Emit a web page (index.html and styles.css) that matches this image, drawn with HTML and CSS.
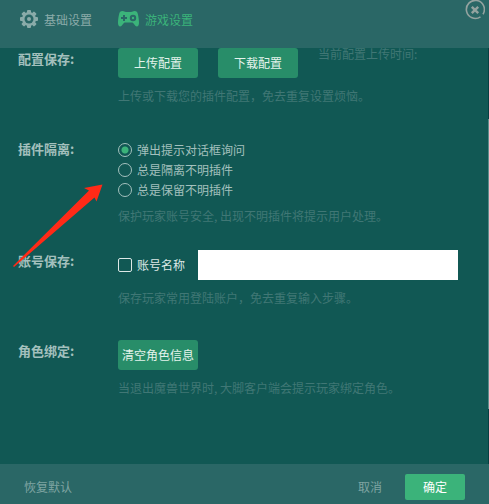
FILE: index.html
```html
<!DOCTYPE html>
<html lang="zh-CN">
<head>
<meta charset="utf-8">
<title>游戏设置</title>
<link rel="stylesheet" href="styles.css">
</head>
<body>
<form class="dialog">
  <header class="header">
    <nav class="tabs">
      <a class="tab" href="#basic">
        <svg class="gear" viewBox="0 0 18 18" width="18" height="18" aria-hidden="true">
          <g fill="currentColor">
            <rect x="7" y="0" width="4" height="18" rx="1"/>
            <rect x="0" y="7" width="18" height="4" rx="1"/>
            <rect x="7" y="0" width="4" height="18" rx="1" transform="rotate(45 9 9)"/>
            <rect x="7" y="0" width="4" height="18" rx="1" transform="rotate(-45 9 9)"/>
            <circle cx="9" cy="9" r="7"/>
          </g>
          <circle class="hole" cx="9" cy="9" r="4.500"/>
          <circle cx="9" cy="9" r="2" fill="currentColor"/>
        </svg>
        <span>基础设置</span>
      </a>
      <a class="tab active" href="#game" aria-current="page">
        <svg class="pad" viewBox="0 0 21 16" width="21" height="16" aria-hidden="true">
          <path fill="currentColor" d="M4.500 0C6 0 6.500 1 8 1h5c1.500 0 2-1 3.500-1 2 0 3 1.200 3.400 3.200.6 2.500 1.100 5.800 1.100 8.800 0 2-.8 3.400-2.200 3.400-1.800 0-2.800-3-4.300-3.900h-8C5 12.400 4 15.400 2.200 15.400.8 15.400 0 14 0 12c0-3 .5-6.300 1.100-8.800C1.500 1.200 2.500 0 4.500 0z"/>
          <path class="mark" d="M3 7h6M6 4v6"/>
          <circle class="mark" cx="15" cy="7" r="2.200"/>
        </svg>
        <span>游戏设置</span>
      </a>
    </nav>
    <button class="close" type="button" aria-label="关闭">
      <svg viewBox="0 0 20 20" width="20" height="20" aria-hidden="true">
        <path d="M15.500 16.800A9 9 0 1 1 18 14.200" stroke-width="1.600"/>
        <path d="M6.800 6.800l6.400 6.400M13.200 6.800l-6.400 6.400" stroke-width="2.400"/>
      </svg>
    </button>
  </header>

  <div class="body">
    <main class="settings">
      <section class="row">
        <h2 class="label">配置保存:</h2>
        <div class="content">
          <div class="line top">
            <button class="btn" type="button">上传配置</button>
            <button class="btn" type="button">下载配置</button>
            <span class="dim">当前配置上传时间:</span>
          </div>
          <p class="hint">上传或下载您的插件配置，免去重复设置烦恼。</p>
        </div>
      </section>
      <section class="row choices">
        <h2 class="label">插件隔离:</h2>
        <div class="content">
          <label class="option"><input type="radio" name="isolate" checked><span>弹出提示对话框询问</span></label>
          <label class="option"><input type="radio" name="isolate"><span>总是隔离不明插件</span></label>
          <label class="option"><input type="radio" name="isolate"><span>总是保留不明插件</span></label>
          <p class="hint near">保护玩家账号安全, 出现不明插件将提示用户处理。</p>
        </div>
      </section>
      <section class="row">
        <h2 class="label">账号保存:</h2>
        <div class="content">
          <div class="line">
            <label class="option account"><input type="checkbox"><span>账号名称</span></label>
            <input class="field" type="text" aria-label="账号名称">
          </div>
          <p class="hint">保存玩家常用登陆账户，免去重复输入步骤。</p>
        </div>
      </section>
      <section class="row">
        <h2 class="label">角色绑定:</h2>
        <div class="content">
          <button class="btn" type="button">清空角色信息</button>
          <p class="hint">当退出魔兽世界时, 大脚客户端会提示玩家绑定角色。</p>
        </div>
      </section>
    </main>
    <div class="track"><div class="thumb"></div></div>
    <svg class="arrow" viewBox="0 0 91 84" width="91" height="84" aria-hidden="true">
      <path d="M90.500.5L72 4l5 2.500L1 82l1 1 80.500-69.500 2 4z"/>
    </svg>
  </div>

  <footer class="footer">
    <button class="link restore" type="button">恢复默认</button>
    <button class="link" type="button">取消</button>
    <button class="ok" type="submit">确定</button>
  </footer>
</form>
</body>
</html>
```
FILE: styles.css
```css
* { box-sizing: border-box; }

body, button, input {
  font-family: "Noto Sans CJK SC", sans-serif;
  font-size: 12px;
  line-height: 20px;
}

body {
  margin: 0;
  color: #a3c0bd;
  background: #115854;
}

button {
  margin: 0;
  padding: 0;
  border: 0;
  background: none;
  color: inherit;
}

.dialog {
  display: flex;
  flex-direction: column;
  min-height: 100vh;
}

.header {
  display: flex;
  justify-content: space-between;
  align-items: flex-start;
  height: 48px;
  padding: 0 4px 0 20px;
  background: #2a6766;
}

.tabs {
  display: flex;
  gap: 26px;
  padding-top: 10px;
}

.tab {
  display: flex;
  align-items: center;
  gap: 6px;
  color: #8aaba9;
  text-decoration: none;
}

.tab.active { color: #3bb37a; }
.gear, .pad { margin-bottom: 2px; }
.hole { fill: #2a6766; }
.mark { fill: none; stroke: #2a6766; stroke-width: 2; }

.close { display: flex; }
.close svg { fill: none; stroke: #94a3a0; }

.body {
  position: relative;
  display: flex;
  flex: 1;
}

.settings {
  flex: 1;
  padding: 0 30px 0 18px;
}

.row {
  display: flex;
  margin-bottom: 32px;
}

.row.choices { margin-bottom: 24px; }
.choices .content { padding-top: 2px; }

.label {
  flex: 0 0 100px;
  margin: 1px 0 0;
  font-size: 13px;
  line-height: 20px;
  font-weight: 700;
}

.content { flex: 1; }

.line {
  display: flex;
  align-items: center;
}

.line.top {
  align-items: flex-start;
  gap: 20px;
}

.btn {
  min-width: 80px;
  height: 30px;
  border-radius: 3px;
  background: #288d69;
  color: #e4f3ec;
}

.dim, .hint { color: #407775; }
.dim { line-height: 12px; }
.hint { margin: 8px 0 0; }
.hint.near { margin-top: 6px; }

.option {
  display: flex;
  align-items: center;
  gap: 5px;
}

.account {
  width: 80px;
  color: #dce8e6;
}

.option input {
  appearance: none;
  width: 14px;
  height: 14px;
  margin: 0;
  border: 1px solid #a3c0bd;
}

.option input[type="radio"] { border-radius: 50%; }

.option input[type="radio"]:checked {
  background: radial-gradient(circle, #3bb37a 3px, transparent 4px);
}

.option input[type="checkbox"] {
  border-color: #dce8e6;
  border-radius: 2px;
}

.field {
  flex: 1;
  min-width: 0;
  height: 30px;
  padding: 0 8px;
  border: 0;
  background: #fff;
}

.track {
  width: 1px;
  padding: 71px 0 55px;
  background: #073f42;
}

.thumb {
  height: 100%;
  background: #5c8d8b;
}

.arrow {
  position: absolute;
  top: 136px;
  left: 12px;
  fill: #ff2a17;
}

.footer {
  display: flex;
  align-items: center;
  height: 40px;
  padding: 6px 24px 0;
  background: #2a6766;
}

.link { color: #7fa4a2; }
.restore { margin-right: auto; }

.ok {
  width: 60px;
  height: 26px;
  margin-left: 23px;
  border-radius: 2px;
  background: #3bb37a;
  color: #fff;
}
```
